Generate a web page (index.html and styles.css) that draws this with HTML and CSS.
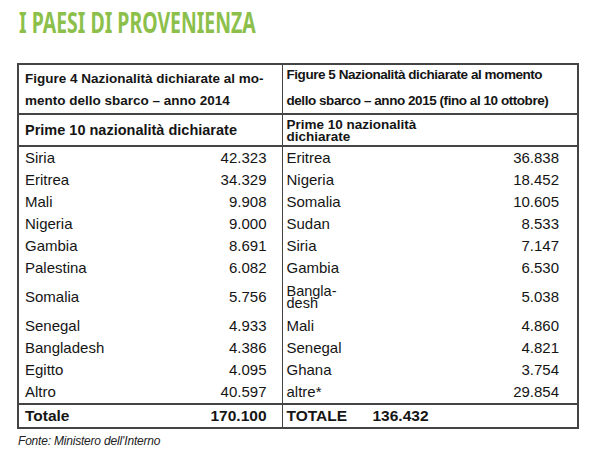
FILE: index.html
```html
<!DOCTYPE html>
<html lang="it">
<head>
<meta charset="utf-8">
<title>I paesi di provenienza</title>
<link rel="stylesheet" href="styles.css">
</head>
<body>
<header class="title-bar"><h1 class="title">I PAESI DI PROVENIENZA</h1></header>
<table class="data">
  <colgroup>
    <col class="c1"><col class="c2"><col class="c3"><col class="c4">
  </colgroup>
  <tr class="head1">
    <th colspan="2" class="left">Figure 4 Nazionalità dichiarate al mo-<br>mento dello sbarco – anno 2014</th>
    <th colspan="2" class="right"><span class="hblock">Figure 5 Nazionalità dichiarate al momento<br>dello sbarco – anno 2015 (fino al 10 ottobre)</span></th>
  </tr>
  <tr class="head2">
    <th colspan="2" class="left">Prime 10 nazionalità dichiarate</th>
    <th colspan="2" class="right tight">Prime 10 nazionalità<br>dichiarate</th>
  </tr>
  <tr class="row">
    <td class="name">Siria</td><td class="num">42.323</td>
    <td class="name r">Eritrea</td><td class="num r">36.838</td>
  </tr>
  <tr class="row">
    <td class="name">Eritrea</td><td class="num">34.329</td>
    <td class="name r">Nigeria</td><td class="num r">18.452</td>
  </tr>
  <tr class="row">
    <td class="name">Mali</td><td class="num">9.908</td>
    <td class="name r">Somalia</td><td class="num r">10.605</td>
  </tr>
  <tr class="row">
    <td class="name">Nigeria</td><td class="num">9.000</td>
    <td class="name r">Sudan</td><td class="num r">8.533</td>
  </tr>
  <tr class="row">
    <td class="name">Gambia</td><td class="num">8.691</td>
    <td class="name r">Siria</td><td class="num r">7.147</td>
  </tr>
  <tr class="row">
    <td class="name">Palestina</td><td class="num">6.082</td>
    <td class="name r">Gambia</td><td class="num r">6.530</td>
  </tr>
  <tr class="row tall">
    <td class="name">Somalia</td><td class="num">5.756</td>
    <td class="name r"><span class="wrap">Bangla-<br>desh</span></td><td class="num r">5.038</td>
  </tr>
  <tr class="row">
    <td class="name">Senegal</td><td class="num">4.933</td>
    <td class="name r">Mali</td><td class="num r">4.860</td>
  </tr>
  <tr class="row">
    <td class="name">Bangladesh</td><td class="num">4.386</td>
    <td class="name r">Senegal</td><td class="num r">4.821</td>
  </tr>
  <tr class="row">
    <td class="name">Egitto</td><td class="num">4.095</td>
    <td class="name r">Ghana</td><td class="num r">3.754</td>
  </tr>
  <tr class="row">
    <td class="name">Altro</td><td class="num">40.597</td>
    <td class="name r">altre*</td><td class="num r">29.854</td>
  </tr>
  <tr class="total">
    <td class="name">Totale</td><td class="num">170.100</td>
    <td colspan="2" class="r"><span class="tlabel">TOTALE</span><span class="tval">136.432</span></td>
  </tr>
</table>
<p class="source">Fonte: Ministero dell’Interno</p>
</body>
</html>
```

FILE: styles.css
```css
html, body {
  margin: 0;
  padding: 0;
  background: #ffffff;
}

body {
  width: 600px;
  height: 455px;
  overflow: hidden;
  font-family: "Liberation Sans", Arial, sans-serif;
  color: #151515;
}

.title-bar {
  height: 54px;
  padding: 6px 0 0 19px;
  box-sizing: border-box;
}

.title {
  display: inline-block;
  margin: 0;
  font-family: "Noto Sans", "Liberation Sans", sans-serif;
  font-size: 28px;
  line-height: 32px;
  font-weight: bold;
  letter-spacing: 0;
  color: #8cc04b;
  white-space: nowrap;
  transform: scaleX(0.695);
  transform-origin: 0 50%;
}

.data {
  margin: 9px 0 0 17px;
  width: 560px;
  border-collapse: collapse;
  table-layout: fixed;
  border: 2px solid #444;
}

.c1 { width: 180px; }
.c2 { width: 84px; }
.c3 { width: 190px; }
.c4 { width: 106px; }

.data th {
  text-align: left;
  font-weight: bold;
  vertical-align: middle;
  border-bottom: 2px solid #444;
}

.data th.left {
  padding: 0 0 0 6px;
  border-right: 1px solid #444;
}

.data th.right {
  padding: 0 0 0 4px;
}

.head1 th {
  font-size: 13.5px;
  height: 47px;
}

.head1 th.left {
  line-height: 22px;
  padding-top: 1px;
}

.head1 th.right {
  letter-spacing: -0.45px;
}

.hblock {
  display: block;
  line-height: 26px;
  margin: -5px 0 -2px;
}

.head2 th {
  font-size: 14.5px;
  line-height: 20px;
  height: 29px;
}

.head2 th.tight {
  font-size: 13.5px;
  line-height: 12px;
  padding-top: 1px;
}

.data td {
  font-size: 15px;
  padding: 0;
  height: 22px;
  line-height: 22px;
  vertical-align: middle;
  white-space: nowrap;
}

.data td.name {
  padding-left: 6px;
}

.data td.num {
  text-align: right;
  padding-right: 15px;
  border-right: 1px solid #444;
}

.data td.name.r {
  padding-left: 4px;
}

.data td.num.r {
  padding-right: 18px;
  border-right: none;
}

.row.tall td {
  height: 36px;
}

.wrap {
  display: inline-block;
  font-size: 14.5px;
  line-height: 12px;
  vertical-align: middle;
}

.total td {
  font-weight: bold;
  font-size: 15.5px;
  border-top: 2px solid #444;
  height: 21px;
}

.total td.r {
  padding-left: 4px;
}

.tlabel {
  display: inline-block;
  width: 86px;
}

.source {
  margin: 5px 0 0 18px;
  font-size: 12px;
  font-style: italic;
  letter-spacing: -0.2px;
  color: #222;
}
```
